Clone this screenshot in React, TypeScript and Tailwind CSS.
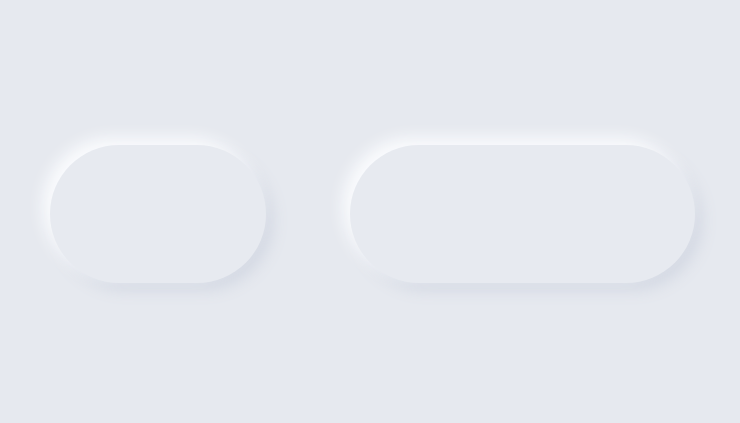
export default function App() {
  return (
    <main className="min-h-screen w-full bg-[#e6e9ef] font-['Liberation_Sans',sans-serif]">
      <div className="flex items-start gap-[84px] pl-[50px] pt-[145px]">
        {/* small pill */}
        <div className="h-[138px] w-[216px] rounded-full bg-[#e7eaf0] shadow-[-7px_-7px_16px_#fbfcfe,7px_7px_16px_#d3d8e3]" />
        {/* wide pill */}
        <div className="h-[138px] w-[345px] rounded-full bg-[#e7eaf0] shadow-[-7px_-7px_16px_#fbfcfe,7px_7px_16px_#d3d8e3]" />
      </div>
    </main>
  );
}
